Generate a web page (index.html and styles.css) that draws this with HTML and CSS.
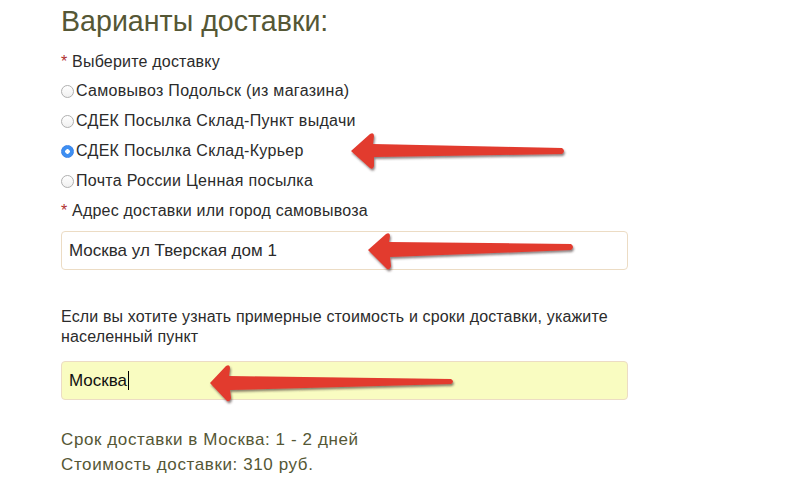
FILE: index.html
```html
<!DOCTYPE html>
<html lang="ru">
<head>
<meta charset="utf-8">
<title>Варианты доставки</title>
<link rel="stylesheet" href="styles.css">
</head>
<body>
<div class="page">
  <h2 class="title">Варианты доставки:</h2>
  <div class="label"><span class="req">*</span> Выберите доставку</div>
  <div class="radios">
    <label class="radio"><input type="radio" name="d"><span>Самовывоз Подольск (из магазина)</span></label>
    <label class="radio"><input type="radio" name="d"><span>СДЕК Посылка Склад-Пункт выдачи</span></label>
    <label class="radio"><input type="radio" name="d" checked><span>СДЕК Посылка Склад-Курьер</span></label>
    <label class="radio"><input type="radio" name="d"><span>Почта России Ценная посылка</span></label>
  </div>
  <div class="label"><span class="req">*</span> Адрес доставки или город самовывоза</div>
  <div class="field">Москва ул Тверская дом 1</div>
  <p class="hint">Если вы хотите узнать примерные стоимость и сроки доставки, укажите<br>населенный пункт</p>
  <div class="field field-yellow">Москва<span class="caret"></span></div>
  <div class="result">
    <div>Срок доставки в Москва: 1 - 2 дней</div>
    <div>Стоимость доставки: 310 руб.</div>
  </div>
</div>
<svg class="arrows" width="800" height="489" viewBox="0 0 800 489">
  <defs>
    <filter id="sh" x="-10%" y="-50%" width="120%" height="200%">
      <feDropShadow dx="1" dy="2" stdDeviation="0.8" flood-color="#3a2a2a" flood-opacity="0.6"/>
    </filter>
  </defs>
  <g fill="#e23a2f" filter="url(#sh)">
    <path d="M351,151 L370,134 Q374,132 374,136 L373,144 L562,148 Q566,151 562,154 L374,157 L374,166 Q373,170 370,168 Z"/>
    <path d="M368,250 L386,234 Q390,232 390,236 L389,242 L571,244 Q575,247 571,250 L390,257 L391,266 Q390,270 387,269 Z"/>
    <path d="M210,383 L226,366 Q230,364 230,368 L229,376 L451,379 Q455,381.5 451,384 L230,390 L231,398 Q230,402 227,401 Z"/>
  </g>
</svg>
</body>
</html>
```

FILE: styles.css
```css
html, body {
  margin: 0;
  padding: 0;
  background: #ffffff;
}
body {
  font-family: "Liberation Sans", Arial, sans-serif;
  color: #2b2b2b;
  width: 800px;
  height: 489px;
  overflow: hidden;
  position: relative;
}
.page {
  padding: 3px 0 0 61px;
  width: 567px;
}
.title {
  margin: 0;
  font-size: 28.6px;
  font-weight: normal;
  line-height: 36px;
  color: #555735;
}
.label {
  margin-top: 13px;
  font-size: 16px;
  line-height: 20px;
  letter-spacing: 0.2px;
}
.req {
  color: #b0322f;
}
.radios {
  display: flex;
  flex-direction: column;
  margin-top: 9px;
  gap: 10px;
}
.radio {
  display: flex;
  align-items: center;
  font-size: 16px;
  line-height: 20px;
  letter-spacing: 0.3px;
}
.radio input {
  -webkit-appearance: none;
  appearance: none;
  width: 13px;
  height: 13px;
  margin: 1px 2px 0 0;
  border: 1px solid #b0b0b0;
  border-radius: 50%;
  background: linear-gradient(#ffffff, #f0f0f0);
  box-sizing: border-box;
}
.radio input:checked {
  border-color: #3b83e8;
  background: radial-gradient(circle, #ffffff 0 2px, #3e8ff2 2.5px);
}
.radios + .label {
  margin-top: 10px;
}
.field {
  margin-top: 10px;
  height: 39px;
  box-sizing: border-box;
  border: 1px solid #ecdcc4;
  border-radius: 4px;
  padding: 0 7px;
  display: flex;
  align-items: center;
  font-size: 17px;
  color: #2b2b2b;
}
.field-yellow {
  margin-top: 14px;
  background: #f9fcc1;
  color: #111111;
}
.caret {
  display: inline-block;
  width: 1px;
  height: 19px;
  background: #000;
  margin-left: 1px;
}
.hint {
  margin: 37px 0 0;
  font-size: 16px;
  line-height: 20px;
  letter-spacing: 0.15px;
}
.result {
  margin-top: 27px;
  font-size: 17px;
  line-height: 25px;
  letter-spacing: 0.6px;
  color: #555735;
}
.arrows {
  position: absolute;
  left: 0;
  top: 0;
  pointer-events: none;
}
```
